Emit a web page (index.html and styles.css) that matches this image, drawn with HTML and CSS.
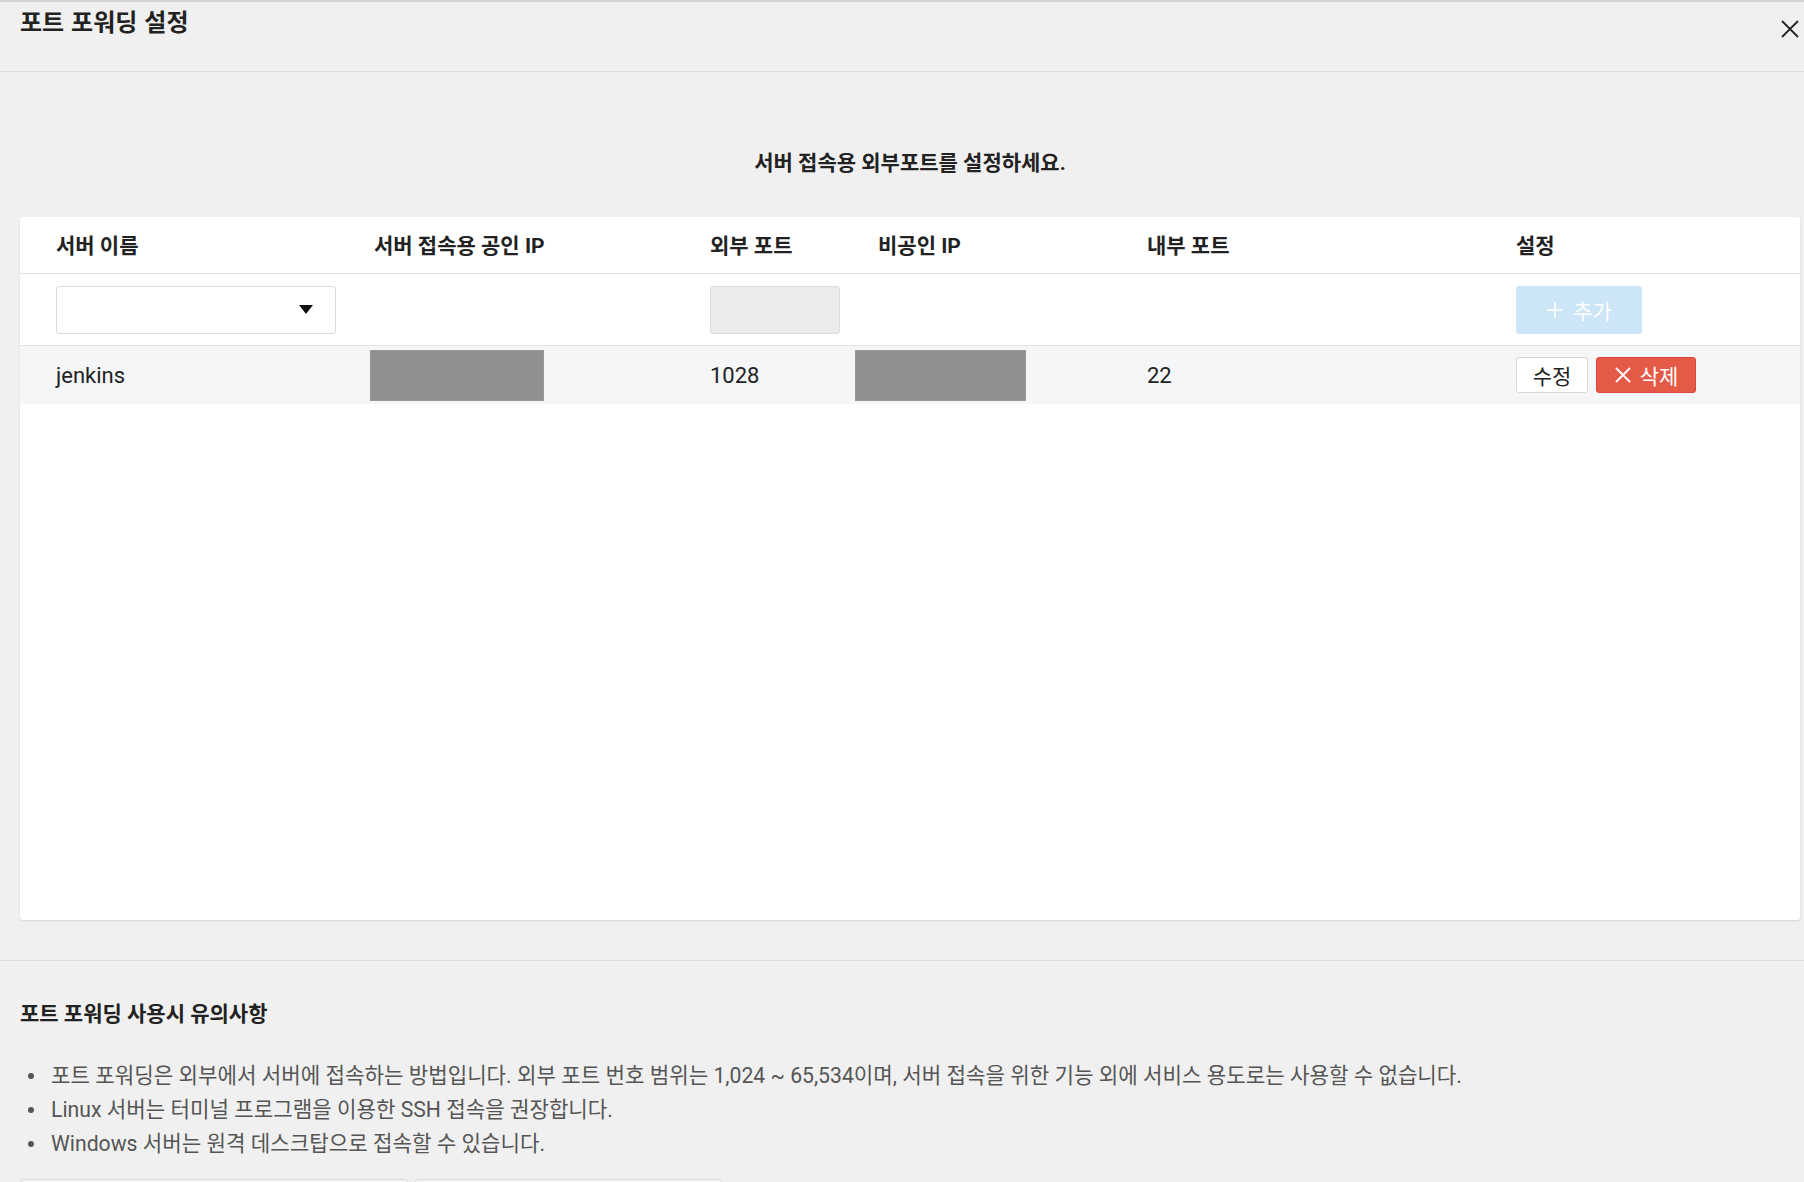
FILE: index.html
```html
<!DOCTYPE html>
<html lang="ko">
<head>
    <meta charset="UTF-8">
    <meta name="viewport" content="width=device-width, initial-scale=1.0">
    <title>포트 포워딩 설정</title>
    <link rel="stylesheet" href="styles.css">
</head>
<body>
    <div class="modal">
        <!-- 상단 제목 -->
        <header class="modal-head">
            <h1>포트 포워딩 설정</h1>
            <button class="close" type="button" aria-label="닫기">
                <svg width="18" height="18" viewBox="0 0 18 18"><path d="M1 1L17 17M17 1L1 17" stroke="#222" stroke-width="1.8" fill="none"/></svg>
            </button>
        </header>

        <main class="modal-body">
            <p class="lead">서버 접속용 외부포트를 설정하세요.</p>

            <div class="card">
                <div class="row row-head">
                    <div>서버 이름</div>
                    <div>서버 접속용 공인 IP</div>
                    <div>외부 포트</div>
                    <div>비공인 IP</div>
                    <div>내부 포트</div>
                    <div>설정</div>
                </div>

                <div class="row row-input">
                    <div>
                        <div class="select"><span class="caret"></span></div>
                    </div>
                    <div></div>
                    <div><input class="port-input" type="text" disabled></div>
                    <div></div>
                    <div></div>
                    <div>
                        <button class="btn btn-add" type="button" disabled>
                            <svg width="18" height="18" viewBox="0 0 18 18"><path d="M9 1V17M1 9H17" stroke="#fff" stroke-width="1.6"/></svg>
                            추가
                        </button>
                    </div>
                </div>

                <div class="row row-data">
                    <div>jenkins</div>
                    <div><span class="masked masked-pub"></span></div>
                    <div>1028</div>
                    <div><span class="masked masked-priv"></span></div>
                    <div>22</div>
                    <div class="actions">
                        <button class="btn btn-edit" type="button">수정</button>
                        <button class="btn btn-delete" type="button">
                            <svg width="18" height="18" viewBox="0 0 18 18"><path d="M2 2L16 16M16 2L2 16" stroke="#fff" stroke-width="1.8"/></svg>
                            삭제
                        </button>
                    </div>
                </div>
            </div>
        </main>

        <!-- 유의사항 -->
        <section class="notice">
            <h2>포트 포워딩 사용시 유의사항</h2>
            <ul>
                <li>포트 포워딩은 외부에서 서버에 접속하는 방법입니다. 외부 포트 번호 범위는 1,024 ~ 65,534이며, 서버 접속을 위한 기능 외에 서비스 용도로는 사용할 수 없습니다.</li>
                <li>Linux 서버는 터미널 프로그램을 이용한 SSH 접속을 권장합니다.</li>
                <li>Windows 서버는 원격 데스크탑으로 접속할 수 있습니다.</li>
            </ul>
            <div class="foot-btns">
                <span class="foot-btn wide"></span>
                <span class="foot-btn"></span>
            </div>
        </section>
    </div>
</body>
</html>
```

FILE: styles.css
```css
body {
    margin: 0;
    font-family: Roboto, "Noto Sans CJK KR", sans-serif;
    background-color: #f0f0f0;
    color: #222;
    overflow: hidden;
}
.modal {
    border-top: 2px solid #d2d2d4;
}
.modal-head {
    display: flex;
    justify-content: space-between;
    align-items: flex-start;
    height: 69px;
    padding: 0 5px 0 20px;
    border-bottom: 1px solid #dcdcdc;
}
h1 {
    margin: 5px 0 0;
    font-size: 24px;
    line-height: 32px;
    font-weight: bold;
    word-spacing: 1px;
    color: #222;
}
.close {
    margin-top: 18px;
    padding: 0;
    border: none;
    background: none;
    width: 18px;
    height: 18px;
    cursor: pointer;
}
.close svg {
    display: block;
}
.modal-body {
    padding: 77px 4px 40px 20px;
}
.lead {
    margin: 0 0 40px;
    text-align: center;
    font-size: 21px;
    line-height: 28px;
    font-weight: bold;
    color: #222;
}
.card {
    height: 703px;
    background: #fff;
    border-radius: 3px;
    box-shadow: 0 1px 2px rgba(0, 0, 0, 0.12);
}
.row {
    display: grid;
    grid-template-columns: 318px 336px 168px 269px 369px 1fr;
    align-items: center;
    padding-left: 36px;
    border-bottom: 1px solid #e4e4e4;
}
.row-head {
    height: 54px;
    padding-bottom: 2px;
    font-size: 21px;
    font-weight: bold;
}
.row-input {
    height: 71px;
}
.row-data {
    height: 58px;
    border-bottom: none;
    background: #f5f6f7;
    font-size: 22px;
}
.select {
    display: flex;
    justify-content: flex-end;
    align-items: center;
    box-sizing: border-box;
    width: 280px;
    height: 48px;
    padding-right: 22px;
    border: 1px solid #dcdcdc;
    border-radius: 3px;
    background: #fff;
}
.caret {
    width: 0;
    height: 0;
    border-left: 7px solid transparent;
    border-right: 7px solid transparent;
    border-top: 9px solid #111;
}
.port-input {
    display: block;
    box-sizing: border-box;
    width: 130px;
    height: 48px;
    margin: 0;
    border: 1px solid #dcdcdc;
    border-radius: 3px;
    background: #ebebeb;
}
.masked {
    display: block;
    height: 51px;
    background: #909090;
    border: 1px solid #999;
    box-sizing: border-box;
}
.masked-pub {
    width: 174px;
    margin-left: -4px;
}
.masked-priv {
    width: 171px;
    margin-left: -23px;
}
.btn {
    display: inline-flex;
    align-items: center;
    justify-content: center;
    gap: 9px;
    box-sizing: border-box;
    border-radius: 3px;
    font-family: inherit;
    font-size: 21px;
    cursor: pointer;
}
.btn-add {
    width: 126px;
    height: 48px;
    border: none;
    background: #cce5f7;
    color: #fff;
}
.actions {
    display: flex;
    gap: 8px;
}
.btn-edit {
    width: 72px;
    height: 36px;
    border: 1px solid #d8d8d8;
    background: #fff;
    color: #222;
}
.btn-delete {
    width: 100px;
    height: 36px;
    gap: 8px;
    border: 1px solid #d9483a;
    background: #e55a47;
    color: #fff;
}
.notice {
    padding-left: 20px;
    border-top: 1px solid #dcdcdc;
}
h2 {
    margin: 39px 0 0;
    font-size: 21px;
    line-height: 28px;
    font-weight: bold;
    color: #222;
}
ul {
    margin: 31px 0 0;
    padding: 0;
    list-style: none;
}
li {
    display: flex;
    align-items: center;
    font-size: 21.2px;
    line-height: 34px;
    color: #555;
}
li::before {
    content: "";
    flex: none;
    width: 6px;
    height: 6px;
    margin: 0 17px 0 8px;
    border-radius: 50%;
    background: #555;
}
.foot-btns {
    display: flex;
    gap: 7px;
    margin-top: 18px;
}
.foot-btn {
    display: block;
    box-sizing: border-box;
    width: 307px;
    height: 44px;
    border: 1px solid #d9d9d9;
    border-radius: 3px;
    background: #f4f4f4;
}
.foot-btn.wide {
    width: 388px;
}
```
